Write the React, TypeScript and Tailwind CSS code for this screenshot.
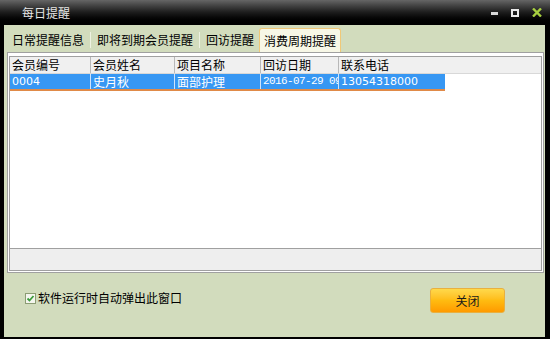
import React from 'react';

const font = { fontFamily: '"Noto Sans CJK SC", "Liberation Sans", sans-serif' };

const tabs = ['日常提醒信息', '即将到期会员提醒', '回访提醒', '消费周期提醒'];

const columns = [
    { title: '会员编号', w: 'w-[80px]' },
    { title: '会员姓名', w: 'w-[84px]' },
    { title: '项目名称', w: 'w-[86px]' },
    { title: '回访日期', w: 'w-[78px]' },
    { title: '联系电话', w: 'w-[107px]' },
];

const row = ['0004', '史月秋', '面部护理', '2016-07-29 09', '13054318000'];

export default function App() {
    const active = 3;

    return (
        <div className="w-[550px] h-[339px] bg-black flex flex-col overflow-hidden text-[12px] leading-none" style={font}>
            {/* title bar */}
            <div className="h-[25px] shrink-0 flex items-center bg-gradient-to-b from-[#666666] via-[#1c1c1c] to-black">
                <span className="ml-[22px] text-[#e6e6e6] text-[12px]">每日提醒</span>
                <div className="ml-auto mr-[8px] flex items-center gap-[13px]">
                    <span className="block w-[7px] h-[3px] bg-[#d8d8d8] mt-[2px]" />
                    <span className="block w-[8px] h-[8px] border-2 border-[#e8e8e8]" />
                    <svg width="10" height="9" viewBox="0 0 10 9">
                        <path d="M1 0.5 L9 8.5 M9 0.5 L1 8.5" stroke="#a8d040" strokeWidth="2.4" />
                    </svg>
                </div>
            </div>

            {/* body */}
            <div className="flex-1 ml-[4px] mr-[5px] mb-[2px] bg-[#d2dcbd] flex flex-col">
                {/* tabs */}
                <div className="h-[27px] shrink-0 flex items-end pl-[3px]">
                    {tabs.map((t, i) => (
                        <div key={t} className="flex items-end h-full">
                            <div
                                className={
                                    i === active
                                        ? 'h-[24px] px-[4px] flex items-center bg-[#f7f7e6] border border-b-0 border-[#f0c878] rounded-t-[3px] text-black'
                                        : 'h-[24px] px-[5px] flex items-center text-black'
                                }
                            >
                                {t}
                            </div>
                            {i < active - 1 && <span className="block w-px h-[16px] mb-[4px] bg-[#eef2e2] mx-px" />}
                        </div>
                    ))}
                </div>

                {/* panel */}
                <div className="ml-[3px] mr-[1px] h-[221px] shrink-0 border border-[#a0a0a0] bg-white px-px pt-[3px] pb-px flex flex-col">
                    <div className="flex-1 border border-[#a0a0a0] bg-white flex flex-col">
                        <div className="flex-1">
                            <div className="flex h-[17px] bg-[#f0f0f0] border-b border-[#d8d8d8]">
                                {columns.map((c, i) => (
                                    <div
                                        key={c.title}
                                        className={`${c.w} shrink-0 flex items-center pl-[2px] ${i > 0 ? 'border-l border-[#b8b8b8]' : ''}`}
                                    >
                                        {c.title}
                                    </div>
                                ))}
                            </div>
                            <div className="flex h-[17px] w-[435px] bg-[#3797f3] text-white border-b-2 border-[#e08a48]">
                                {columns.map((c, i) => (
                                    <div
                                        key={c.title}
                                        className={`${c.w} shrink-0 flex items-center pl-[2px] overflow-hidden whitespace-nowrap ${i > 0 ? 'border-l border-[#cfe4fb]' : ''}`}
                                    >
                                        {i === 3 ? (
                                            <span className="text-[11px] tracking-[-0.6px]" style={{ fontFamily: '"Liberation Mono", monospace' }}>
                                                {row[i]}
                                            </span>
                                        ) : i === 0 || i === 4 ? (
                                            <span className="text-[11px]" style={{ fontFamily: '"DejaVu Sans", sans-serif' }}>
                                                {row[i]}
                                            </span>
                                        ) : (
                                            <span>{row[i]}</span>
                                        )}
                                    </div>
                                ))}
                            </div>
                        </div>
                        <div className="h-[22px] bg-[#eeeeee] border-t border-[#a0a0a0]" />
                    </div>
                </div>

                {/* bottom */}
                <div className="flex-1 flex items-start pt-[15px] pl-[21px] pr-[40px]">
                    <label className="flex items-center gap-[2px] text-black mt-[4px]">
                        <span className="w-[11px] h-[11px] border border-[#8c9c74] bg-[#f4f6ee] flex items-center justify-center">
                            <svg width="9" height="9" viewBox="0 0 9 9">
                                <path d="M1.5 4.5 L3.5 6.5 L7.5 2" stroke="#3c9c3c" strokeWidth="1.8" fill="none" />
                            </svg>
                        </span>
                        软件运行时自动弹出此窗口
                    </label>
                    <button className="ml-auto w-[75px] h-[25px] rounded-[3px] border border-[#e8b040] bg-gradient-to-b from-[#ffd94a] via-[#ffbb10] to-[#ff9a00] text-[#1a1a1a] text-[12px]">
                        关闭
                    </button>
                </div>
            </div>
        </div>
    );
}
